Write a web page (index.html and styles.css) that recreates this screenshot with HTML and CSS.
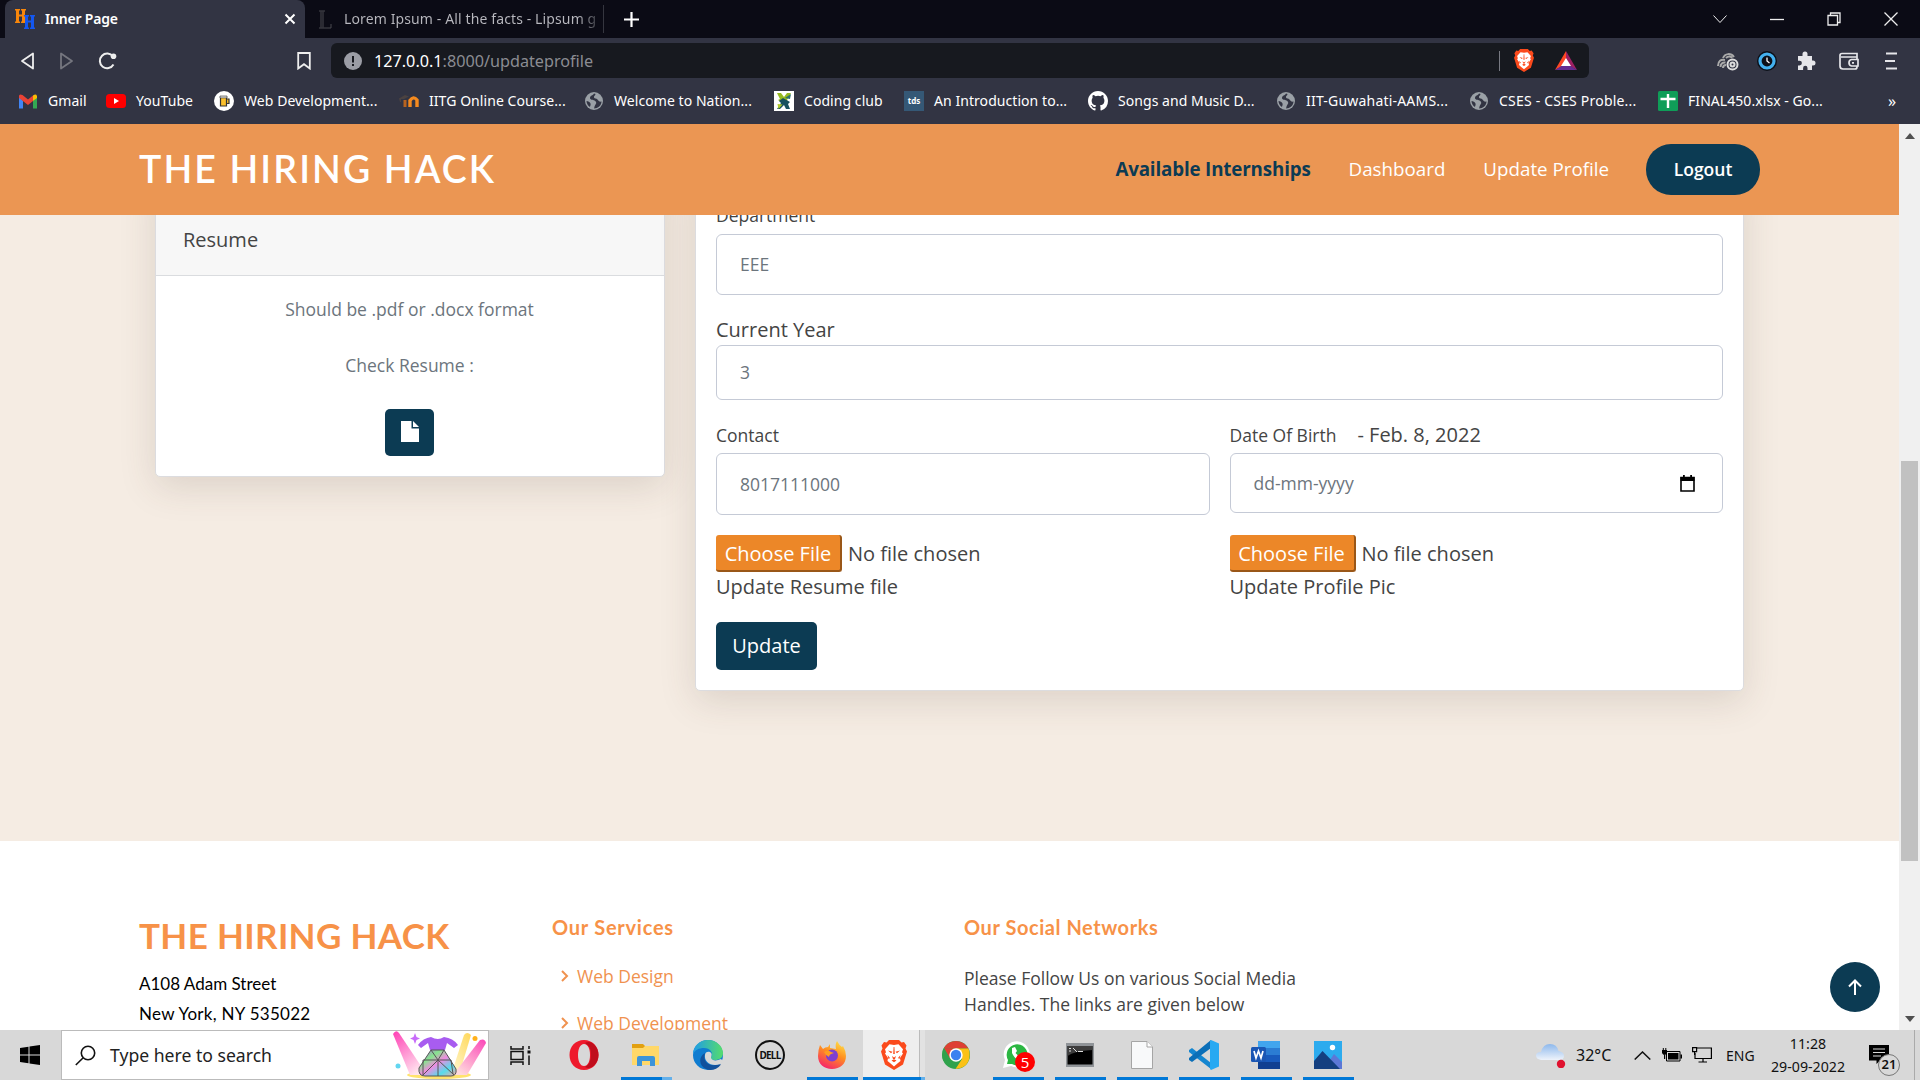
FILE: index.html
```html
<!DOCTYPE html>
<html lang="en">
<head>
<meta charset="utf-8">
<title>Inner Page</title>
<link rel="stylesheet" href="styles.css">
</head>
<body>
<svg class="defs" width="0" height="0">
  <symbol id="globe" viewBox="0 0 20 20"><circle cx="10" cy="10" r="9" fill="#9aa0a6"/><path d="M10 2.500c-1 2-4 2-4 4.500 0 2 3 1.500 4.500 2.500s2.500 2 1 4-1 3.500-1.500 4c4 0 7.500-3 7.500-7-2 .5-3-.5-4-2s-3-.5-3.500-2 1.500-2 1.500-3.500zM2.500 10c1.500 0 3.500 1 4 2.500s-.5 2.500-.5 3.500C4 15 2.500 12.500 2.500 10z" fill="#323443"/></symbol>
  <symbol id="lion" viewBox="0 0 26 30"><path d="M8 0h10l2.500 2.500 2.500-.5 2.500 3.500-1 3 1.500 3-4 13L13 30 4 24.500 0 11.500l1.500-3-1-3L3 2l2.500.5z" fill="#fb4a1c"/><path d="M13 5l4.500-.8 4.500 5-1 3 1 1.300-3 4.500.5 3-2.500 2L13 26.500 9 23l-2.500-2 .5-3-3-4.500 1-1.300-1-3 4.500-5z" fill="#fff"/><path d="M7 10.500l4.500 1.200-1.500 1.500zM19 10.500l-4.500 1.200 1.500 1.500zM10.500 20.500l2.500-1.200 2.500 1.200-2.500 1.700zM12.600 7h.8l.4 7h-1.600zM11 16l2 1.500 2-1.500-1 3h-2zM6.500 15l2.500 3-1.500 1zM19.500 15L17 18l1.500 1z" fill="#fb4a1c"/></symbol>
</svg>

<div class="tabs">
  <div class="tab tab-on">
    <svg width="20" height="20" viewBox="0 0 20 20"><path d="M0 0h5v1.500H4v4h3v-4H6V0h5v1.500h-1v11h1V14H6v-1.500h1V7.500H4v5h1V14H0v-1.500h1v-11H0z" fill="#f7860b"/><path d="M9 6h5v1.500h-1v4h3v-4h-1V6h5v1.500h-1v11h1V20h-5v-1.500h1v-5h-3v5h1V20H9v-1.500h1v-11H9z" fill="#1457f0"/></svg>
    <span class="tab-title">Inner Page</span>
    <svg width="12" height="12" viewBox="0 0 12 12" stroke="#fff" stroke-width="2"><path d="M1.500 1.500l9 9M10.500 1.500l-9 9"/></svg>
  </div>
  <div class="tab tab-off">
    <svg width="14" height="19" viewBox="0 0 14 19" fill="none" stroke="#4b4b50"><path d="M1 1h6M1 18h12v-4M3 1.500v16M5 1.500v16"/></svg>
    <span class="tab-title">Lorem Ipsum - All the facts - Lipsum g</span>
  </div>
  <svg class="plus" width="15" height="15" viewBox="0 0 15 15" stroke="#fff" stroke-width="2.200"><path d="M7.500 0v15M0 7.500h15"/></svg>
  <div class="winctl">
    <svg width="14" height="14" viewBox="0 0 14 14"><path d="M.5 3.500l6.500 7 6.500-7"/></svg>
    <svg width="14" height="14" viewBox="0 0 14 14"><path d="M0 7.500h14" stroke-width="1.300"/></svg>
    <svg width="14" height="14" viewBox="0 0 14 14"><path d="M1 3.500h9.500V13H1zM3.500 3.500V1H13v9.500h-2.500" stroke-width="1.300"/></svg>
    <svg width="14" height="14" viewBox="0 0 14 14"><path d="M.5.5l13 13M13.500.5l-13 13" stroke-width="1.300"/></svg>
  </div>
</div>

<div class="toolbar">
  <div class="navs">
    <svg width="15" height="18" viewBox="0 0 15 18"><path d="M13 1.500v15L2 9z"/></svg>
    <svg class="dim" width="15" height="18" viewBox="0 0 15 18"><path d="M2 1.500v15L13 9z"/></svg>
    <svg width="19" height="18" viewBox="0 0 19 18"><path d="M15.500 12.500A7.300 7.300 0 1 1 15 4.500" stroke-width="2"/><circle cx="15.500" cy="4.300" r="2.800" fill="#eee" stroke="none"/></svg>
  </div>
  <svg class="mark" width="14" height="18" viewBox="0 0 14 18"><path d="M1.200 1h11.600v15.500L7 12.200l-5.800 4.300z"/></svg>
  <div class="url">
    <svg width="18" height="18" viewBox="0 0 18 18"><circle cx="9" cy="9" r="9" fill="#9b9da5"/><path d="M8 4h2v6.500H8zM8 12h2v2H8z" fill="#17191f"/></svg>
    <span class="addr"><b>127.0.0.1</b>:8000/updateprofile</span>
    <i class="bar"></i>
    <svg width="20" height="23"><use href="#lion"/></svg>
    <svg class="bat" width="22" height="19" viewBox="0 0 22 19"><path d="M11 0L0 19l11-6z" fill="#ff4724"/><path d="M11 0l11 19-11-6z" fill="#9e1f63"/><path d="M0 19h22l-11-7z" fill="#662d91"/><path d="M11 7l5 8H6z" fill="#fff"/></svg>
  </div>
  <div class="exts">
    <svg width="22" height="20" viewBox="0 0 22 20"><g fill="none" stroke="#aaa" stroke-width="2"><path d="M1 15c0-5 3-7 7-6M3.500 16c0-3 2-5 5-4.500M6 17c0-2 1-3 3-3M6 7c2-5 8-5 11-1M9 7c2-2 5-2 6 0"/><circle cx="15.500" cy="13.500" r="5" stroke="#ddd"/><circle cx="15.500" cy="13.500" r="2" stroke="#ddd"/></g></svg>
    <svg class="e2" width="20" height="20" viewBox="0 0 20 20"><circle cx="10" cy="10" r="10" fill="#0c1018"/><circle cx="10" cy="10" r="7" fill="#0c1018" stroke="#43b0ee" stroke-width="3.200"/><path d="M10 6.500V10l2.500 2" fill="none" stroke="#fff" stroke-width="1.300"/></svg>
    <svg class="e3" width="19" height="19" viewBox="0 0 19 19"><path d="M1 5h4.500V3a2.500 2.500 0 0 1 5 0v2H15v4.500h1a2.500 2.500 0 0 1 0 5h-1V19h-4.500v-2a2.200 2.200 0 0 0-4.400 0v2H1v-4.500h1.500a2.400 2.400 0 0 0 0-4.800H1z" fill="#e6e6ea"/></svg>
    <svg class="e4" width="20" height="18" viewBox="0 0 20 18" fill="none" stroke="#e6e6ea" stroke-width="1.700"><path d="M18 5V1.500H3Q1 1.500 1 3.500V14q0 3 3 3h12q2 0 2-2v-1M2 5h16v2"/><path d="M19 7.500h-6.500Q10 8 10 10.800t2.500 3.200H19z"/><path d="M13 10.800h2"/></svg>
    <svg class="e5" width="12" height="18" viewBox="0 0 12 18" stroke="#e6e6ea" stroke-width="1.800"><path d="M1 1.500h11M0 9h10M1 16.500h11"/></svg>
  </div>
</div>

<div class="marks">
  <a><svg width="20" height="15" viewBox="0 0 20 15"><path d="M1 2v12.500h4V7z" fill="#4285f4"/><path d="M19 2v12.500h-4V7z" fill="#34a853"/><path d="M15 1.500V7l4-3V2q-1-2.500-4-.5z" fill="#fbbc04"/><path d="M1 4l9 7 5-4V1.500L10 5.500 4.500 1Q1-.5 1 2z" fill="#ea4335"/></svg><span>Gmail</span></a>
  <a><svg width="20" height="14" viewBox="0 0 20 14"><rect width="20" height="14" rx="3.500" fill="#f00"/><path d="M8 4l5 3-5 3z" fill="#fff"/></svg><span>YouTube</span></a>
  <a><svg width="20" height="20" viewBox="0 0 20 20"><circle cx="10" cy="10" r="10" fill="#fff"/><path d="M6.500 6h6v9h-6zM12.500 8H15v4.500h-2.500" fill="#fbc02d" stroke="#333" stroke-width="1.200"/><path d="M6 5h7v2H6z" fill="#ddd" stroke="#333" stroke-width=".6"/></svg><span>Web Development...</span></a>
  <a><svg width="20" height="14" viewBox="0 0 20 14"><path d="M6 13V6" stroke="#b8631f" stroke-width="3"/><path d="M11 13V6.500q3.500-5 7-.5V13" fill="none" stroke="#f58a1f" stroke-width="3.400"/><path d="M0 4.500L6 1l4 1.500-5 2.500-3 0v3H1z" fill="#4b4241"/></svg><span>IITG Online Course...</span></a>
  <a><svg width="20" height="20"><use href="#globe"/></svg><span>Welcome to Nation...</span></a>
  <a><svg width="20" height="20" viewBox="0 0 20 20"><path d="M0 0h20v20H0z" fill="#fff"/><path d="M3 2h4l3 4 3-4h4l-4 7 2 3-5 1-6-4 2-1z" fill="#95b91f"/><path d="M16 18h-4l-2-4-4 4H3l4-6-2-2 4-3 7 4-2 2z" fill="#17505e"/><path d="M3.500 13l5 .5-4 4.500z" fill="#b4cc2c"/><path d="M17 3l-1 5-5-1z" fill="#2a6f6f"/></svg><span>Coding club</span></a>
  <a><i class="tds">tds</i><span>An Introduction to...</span></a>
  <a><svg width="20" height="20" viewBox="0 0 16 16"><path fill="#fff" d="M8 0C3.580 0 0 3.580 0 8c0 3.540 2.290 6.530 5.470 7.590.4.070.55-.17.55-.38 0-.19-.01-.82-.01-1.490-2.010.37-2.530-.49-2.690-.94-.09-.23-.48-.94-.82-1.130-.28-.15-.68-.52-.01-.53.630-.01 1.080.58 1.230.82.720 1.210 1.870.87 2.330.66.070-.52.280-.87.510-1.070-1.780-.2-3.640-.89-3.640-3.950 0-.87.310-1.590.82-2.150-.08-.2-.36-1.020.08-2.120 0 0 .67-.21 2.200.82a7.600 7.600 0 0 1 4 0c1.530-1.040 2.200-.82 2.200-.82.440 1.100.160 1.920.080 2.120.51.560.82 1.270.82 2.150 0 3.070-1.870 3.750-3.650 3.950.29.250.54.730.54 1.480 0 1.070-.01 1.930-.01 2.200 0 .21.150.46.550.38A8 8 0 0 0 16 8c0-4.420-3.580-8-8-8z"/></svg><span>Songs and Music D...</span></a>
  <a><svg width="20" height="20"><use href="#globe"/></svg><span class="w2">IIT-Guwahati-AAMS...</span></a>
  <a><svg width="20" height="20"><use href="#globe"/></svg><span class="w2">CSES - CSES Proble...</span></a>
  <a><svg width="20" height="20" viewBox="0 0 20 20"><rect width="20" height="20" rx="1.500" fill="#0f9d58"/><path d="M10 3v14M2.500 8h15" stroke="#fff" stroke-width="2.400"/></svg><span>FINAL450.xlsx - Go...</span></a>
  <span class="more">»</span>
</div>

<div class="view">
  <div class="page">
    <header class="header">
      <h1 class="logo">THE HIRING HACK</h1>
      <nav>
        <a class="cur">Available Internships</a>
        <a>Dashboard</a>
        <a>Update Profile</a>
        <a class="logout"><span>Logout</span></a>
      </nav>
    </header>
    <main class="main">
      <section class="card resume">
        <div class="card-head"><span>Resume</span></div>
        <div class="card-body">
          <p><span>Should be .pdf or .docx format</span></p>
          <p><span>Check Resume :</span></p>
          <a class="filebtn"><svg width="18" height="21" viewBox="0 0 18 21" fill="#fff"><path d="M0 0h10.500v7.500H18V21H0z"/><path d="M12 0l6 6h-6z"/></svg></a>
        </div>
      </section>
      <section class="card form">
        <label class="sm">Department</label>
        <div class="field f1"><span>EEE</span></div>
        <label class="lg">Current Year</label>
        <div class="field f2"><span>3</span></div>
        <div class="cols">
          <div class="col">
            <label class="sm">Contact</label>
            <div class="field f3"><span>8017111000</span></div>
          </div>
          <div class="col">
            <div class="dob"><label class="sm">Date Of Birth</label><span>- Feb. 8, 2022</span></div>
            <div class="field f4"><span>dd-mm-yyyy</span><svg width="15" height="17" viewBox="0 0 15 17"><path d="M1 2.500h13V16H1z" fill="none" stroke="#000" stroke-width="1.600"/><path d="M.5 2h14v4H.5zM3 0h1.800v3H3zM10.200 0H12v3h-1.800z"/></svg></div>
          </div>
        </div>
        <div class="cols files">
          <div class="col">
            <div class="file"><span class="choose">Choose File</span><span>No file chosen</span></div>
            <div class="cap"><span>Update Resume file</span></div>
          </div>
          <div class="col">
            <div class="file"><span class="choose">Choose File</span><span>No file chosen</span></div>
            <div class="cap"><span>Update Profile Pic</span></div>
          </div>
        </div>
        <a class="update"><span>Update</span></a>
      </section>
    </main>
    <footer class="footer">
      <div class="f-about">
        <h3>THE HIRING HACK</h3>
        <p class="a1">A108 Adam Street</p>
        <p class="a2">New York, NY 535022</p>
      </div>
      <div class="f-serv">
        <h4>Our Services</h4>
        <a><svg width="8" height="12" viewBox="0 0 8 12"><path d="M1 1l5 5-5 5"/></svg><span>Web Design</span></a>
        <a><svg width="8" height="12" viewBox="0 0 8 12"><path d="M1 1l5 5-5 5"/></svg><span>Web Development</span></a>
      </div>
      <div class="f-soc">
        <h4>Our Social Networks</h4>
        <p><span>Please Follow Us on various Social Media</span><br><span>Handles. The links are given below</span></p>
      </div>
      <a class="totop"><svg width="14" height="16" viewBox="0 0 14 16" fill="none" stroke="#fff" stroke-width="2"><path d="M7 16V1.500M1 7.500l6-6 6 6"/></svg></a>
    </footer>
  </div>
  <div class="scroll">
    <svg width="10" height="6" viewBox="0 0 10 6"><path d="M5 0l5 6H0z" fill="#505050"/></svg>
    <i class="thumb"></i>
    <svg width="10" height="6" viewBox="0 0 10 6"><path d="M5 6l5-6H0z" fill="#505050"/></svg>
  </div>
</div>

<div class="task">
  <div class="start"><svg width="20" height="20" viewBox="0 0 20 20"><path d="M0 3l8.500-1.300v7.800H0zM9.500 1.500L20 0v9.500H9.500zM0 10.500h8.500v7.800L0 17zM9.500 10.500H20V20L9.500 18.500z"/></svg></div>
  <div class="search">
    <svg width="21" height="21" viewBox="0 0 21 21" fill="none" stroke="#111" stroke-width="1.600"><circle cx="13" cy="8" r="6.700"/><path d="M8.200 12.800L.8 20"/></svg>
    <span>Type here to search</span>
    <svg class="art" width="94" height="48" viewBox="0 0 94 48">
      <defs>
        <linearGradient id="b1" x2=".6" y2="1"><stop stop-color="#ff40b5"/><stop offset="1" stop-color="#ffe3ee"/></linearGradient>
        <linearGradient id="b2" x1="1" x2=".3" y2="1"><stop stop-color="#fb45b8"/><stop offset="1" stop-color="#ffd9dc"/></linearGradient>
        <linearGradient id="b3" x1="1" x2=".3" y2="1"><stop stop-color="#ffd85a"/><stop offset="1" stop-color="#fff5c8"/></linearGradient>
        <linearGradient id="dr" x2="1" y2="1"><stop stop-color="#b65cf5"/><stop offset=".3" stop-color="#86e58c"/><stop offset=".5" stop-color="#f08ae0"/><stop offset=".75" stop-color="#56dcec"/><stop offset="1" stop-color="#ffa8a0"/></linearGradient>
      </defs>
      <ellipse cx="46" cy="44" rx="32" ry="4" fill="#ffe36e"/>
      <path d="M0 3q3-5 6-1l28 42H17z" fill="url(#b1)"/><path d="M78 4q-4-4-7 0L58 44h8z" fill="url(#b3)"/><path d="M93 12q-1-5-6-3L60 44h14z" fill="url(#b2)"/>
      <path d="M22 2l1.500 4L27 7.500 23.500 9 22 13l-1.500-4L17 7.500 20.500 6z" fill="#c86bfa"/><circle cx="82" cy="7.500" r="2.500" fill="#ffb11a"/><circle cx="5" cy="35" r="2.500" fill="#62d6f0"/>
      <path d="M38 6q7 4 13 0 9 1 14 8l-4 3-7-5-2 7H37l-2-7-7 5-3-3q5-7 13-8z" fill="#a85cf0"/>
      <path d="M38 19h13l12 19q1 7-5 7H32q-7 0-6-8z" fill="url(#dr)" stroke="#555" stroke-width="1"/>
      <path d="M30 29h28M38 19l7 10 6-10M45 29L30 44M45 29l16 15M45 29v16M30 29l0 15M58 29l2 14" fill="none" stroke="#555"/>
    </svg>
  </div>
  <div class="view-btn"><svg width="21" height="19" viewBox="0 0 21 19" fill="none" stroke="#111" stroke-width="1.500"><path d="M1 0v3h12V0M1 5.500h12v8H1zM1 19v-3h12v3M19 0v3M19 9.500V19"/><path d="M17.500 4.500h3v3h-3z" fill="#111" stroke="none"/></svg></div>
  <div class="apps">
    <div class="app"><svg width="30" height="30" viewBox="0 0 30 30"><path fill-rule="evenodd" d="M15 0C6.500 0 .5 6.500.5 15S6.500 30 15 30s14.500-6.500 14.500-15S23.500 0 15 0zm0 4c4 0 6 5 6 11s-2 11-6 11-6-5-6-11 2-11 6-11z" fill="#ee1a2c"/><path d="M24 3.500q5.500 4.500 5.500 11.500T24 26.500Q20 29 16 27q6-3 6-12T16 3q4-2 8 .5z" fill="#c00d1c"/></svg></div>
    <div class="app run many"><svg width="30" height="30" viewBox="0 0 30 30"><path d="M1 4h11l2 2v4H1z" fill="#e2a010"/><path d="M1 8h11l2-2h14v19H1z" fill="#ffd869"/><path d="M6 26v-8q0-2 2-2h14q2 0 2 2v8h-5v-5h-8v5z" fill="#3c94d9"/></svg></div>
    <div class="app"><svg width="30" height="30" viewBox="0 0 30 30"><defs><linearGradient id="eg" x2="1"><stop stop-color="#1f9be8"/><stop offset="1" stop-color="#55dd6c"/></linearGradient></defs><circle cx="15" cy="15" r="15" fill="#0f7cd0"/><path d="M0 14C0 6 7 0 15 0s15 6 15 13c0 5-4 7-8 7-3 0-5-1-4-3 3-4-1-9-7-9-5 0-9 2-11 6z" fill="url(#eg)"/><path d="M12 13c-3 8 4 15 14 11l2 .5C24 30 17 31 13 29c-7-3-8-12-1-16z" fill="#12519c"/><path d="M12 15c0-3 3-4 5-3 3 2 1 4 1 6 1 3 6 3 10 1l2 2-2.500 3C18 27 11 22 12 15z" fill="#d8d8d8"/></svg></div>
    <div class="app"><div class="dell">DELL</div></div>
    <div class="app run"><svg width="30" height="30" viewBox="0 0 30 30"><defs><linearGradient id="fx" x1=".8" x2=".3" y2="1"><stop stop-color="#ffe14a"/><stop offset=".45" stop-color="#ff8f20"/><stop offset="1" stop-color="#f5236c"/></linearGradient></defs><path d="M3 5l3 4q2-2 5-2l2-3v4l6 1q-1-5 1-8 2 4 5 6l1-1q3 5 3 10c0 8-6 13-14 13S1 24 1 16Q1 10 3 5z" fill="url(#fx)"/><circle cx="15" cy="15.500" r="6" fill="#7f3fd0"/><path d="M7 12q4-3 7 0l3 1q-5 1-5 4-3-1-5-5z" fill="#ff9c21"/></svg></div>
    <div class="app run many active"><svg width="26" height="30"><use href="#lion"/></svg></div>
    <div class="app"><svg width="28" height="28" viewBox="0 0 28 28"><circle cx="14" cy="14" r="14" fill="#2fa24c"/><path d="M2 7Q6 0 14 0t12.500 7.500H14z" fill="#de4033"/><path d="M14 7.500h12.500Q29 15 26 21t-12.500 7l6.500-10z" fill="#fbc116"/><path d="M1.900 7L8 18l6-10.500z" fill="#de4033"/><path d="M1.900 7Q-1 13 1.500 20L9 19z" fill="#2fa24c"/><circle cx="14" cy="14" r="6.700" fill="#fff"/><circle cx="14" cy="14" r="5.200" fill="#3b82f0"/></svg></div>
    <div class="app run"><svg width="30" height="30" viewBox="0 0 30 30"><path d="M0 28l2-8a13 13 0 1 1 6 6z" fill="#fff"/><path d="M4 24l1-4a10.500 10.500 0 1 1 4 4z" fill="#2cb742"/><path d="M9 8l3-1 2 4-1.500 2 4 4 2-1.500 4 2-1 3Q13 22 9 13z" fill="#fff"/></svg><b class="badge">5</b></div>
    <div class="app run"><svg width="28" height="24" viewBox="0 0 28 24"><path d="M0 0h28v24H0z" fill="#909498"/><path d="M1.500 3h25v18.500h-25z"/><path d="M1.500 3h25v4Q8 8 1.500 13z" fill="#3e3e3e"/><path d="M3 5.500h2M3 8h2M7 5l4 4M12 8.500h5" stroke="#ddd" fill="none"/></svg></div>
    <div class="app run"><svg width="22" height="28" viewBox="0 0 22 28"><path d="M.5.5h15.500l5.500 5.500v21.500H.5z" fill="#f8f9fa" stroke="#a5a5a5"/><path d="M16 .5V6h5.500" fill="#fff" stroke="#a5a5a5"/></svg></div>
    <div class="app run"><svg width="30" height="30" viewBox="0 0 30 30"><path d="M3 8L22 23v6L0 12v-2z" fill="#1486d0"/><path d="M22 0v8L3 22l-3-2v-2z" fill="#0b6fb8"/><path d="M22 0l8 3.500v23L22 30l-1-1V1z" fill="#27a9f2"/></svg></div>
    <div class="app run"><svg width="30" height="28" viewBox="0 0 30 28"><path d="M7 0h22v7H7z" fill="#41a5ee"/><path d="M7 7h22v7H7z" fill="#2b7cd3"/><path d="M7 14h22v7H7z" fill="#185abd"/><path d="M7 21h22v7H7z" fill="#103f91"/><rect y="6" width="15" height="15" rx="1.500" fill="#1a56b4"/><path d="M3 10l2 7 2.500-7L10 17l2-7" fill="none" stroke="#fff" stroke-width="1.700"/></svg></div>
    <div class="app run"><svg width="28" height="28" viewBox="0 0 28 28"><path d="M0 0h28v28H0z" fill="#2cabee"/><path d="M10 28l10-15 8 8v7z" fill="#5c77d6"/><path d="M0 20l8.500-10L26 28H0z" fill="#143f80"/><circle cx="18.500" cy="6.500" r="2.700" fill="#fff"/></svg></div>
  </div>
  <div class="tray">
    <svg class="cloud" width="30" height="25" viewBox="0 0 30 25"><defs><linearGradient id="cl" x2="0" y2="1"><stop stop-color="#8db8ec"/><stop offset="1" stop-color="#eef3fb"/></linearGradient></defs><path d="M5 17Q0 16 0 12.500T5 9Q7 1 14 1t8.500 7Q28 9 28 13t-5 4z" fill="url(#cl)"/><circle cx="25" cy="21" r="4.200" fill="#e0122f"/></svg>
    <span class="temp">32°C</span>
    <svg class="up" width="17" height="9" viewBox="0 0 17 9" fill="none" stroke="#111" stroke-width="1.500"><path d="M.7 8.500l7.800-7.500 7.800 7.500"/></svg>
    <svg class="batt" width="20" height="14" viewBox="0 0 20 14"><path d="M4.500 3.500H18v9.500H4.500z" fill="none" stroke="#000"/><path d="M6 5h10.500v6.500H6zM18.500 6.500H20v4h-1.500zM0 2h5v3q-1 2-2.500 2T0 5zM.8 0h1v2h-1zM3.300 0h1v2h-1zM2 7h1.200v4H2z"/></svg>
    <svg class="net" width="20" height="16" viewBox="0 0 20 16" fill="none" stroke="#000" stroke-width="1.200"><path d="M5 1h14.400v10.500H3V6M11 11.500V15M6.500 15H15"/><path d="M.6.6h4v4h-4zM2.600 4.500V8"/></svg>
    <span class="eng">ENG</span>
    <div class="clock"><span class="time">11:28</span><span class="date">29-09-2022</span></div>
    <div class="notif"><svg width="20" height="20" viewBox="0 0 20 20"><path d="M0 0h20v15.500H11L7.500 19v-3.500H0z"/><path d="M4 4h12M4 7.500h12M4 11h8" stroke="#d8d8d8" stroke-width="1.200"/></svg><b>21</b></div>
  </div>
</div>
</body>
</html>
```
FILE: styles.css
```css
* { box-sizing: border-box; }
body { margin: 0; width: 1920px; height: 1080px; overflow: hidden; display: flex; flex-direction: column; font-family: "Open Sans", "Noto Sans", sans-serif; color: #444; }
svg { display: block; flex: none; }
.defs { position: absolute; }
h1, h3, h4, p { margin: 0; }
span, a, label { white-space: nowrap; }

/* browser chrome */
.tabs { height: 38px; flex: none; background: #0b0b15; display: flex; align-items: center; padding-left: 5px; font-family: "Noto Sans", sans-serif; font-size: 14px; color: #fff; }
.tab { height: 38px; display: flex; align-items: center; gap: 10px; }
.tab-title { padding-bottom: 2px; }
.tab-on { width: 300px; background: #323443; border-radius: 8px 8px 0 0; padding: 0 9px 0 10px; }
.tab-on .tab-title { flex: 1; font-weight: 600; letter-spacing: -.2px; }
.tab-off { width: 299px; height: 28px; padding-left: 13px; gap: 12px; border-right: 1px solid #35363f; }
.tab-off .tab-title { width: 254px; overflow: hidden; letter-spacing: .12px; background: linear-gradient(90deg, #b9b9bf 92%, #33343c); background-clip: text; color: transparent; }
.plus { margin-left: 20px; }
.winctl { margin-left: auto; display: flex; gap: 43px; padding-right: 22px; fill: none; stroke: #eee; }
.toolbar { height: 45px; flex: none; background: #323443; display: flex; align-items: center; }
.navs { width: 297px; padding-left: 20px; display: flex; gap: 24px; fill: none; stroke: #eee; stroke-width: 1.800; stroke-linejoin: round; }
.dim { stroke: #75767f; }
.mark { fill: none; stroke: #eee; stroke-width: 1.800; }
.url { margin-left: 20px; width: 1258px; height: 35px; border-radius: 6px; background: #17191f; display: flex; align-items: center; padding: 0 12px 0 13px; }
.addr { margin-left: 12px; flex: 1; font: 16.200px "Noto Sans", sans-serif; color: #8b8c92; }
.addr b { color: #fff; font-weight: 400; }
.bar { width: 1px; height: 20px; background: #777982; margin-right: 14px; }
.bat { margin-left: 21px; }
.exts { flex: 1; display: flex; align-items: center; padding-left: 128px; }
.e2 { margin-left: 18px; }
.e3 { margin-left: 20px; }
.e4 { margin-left: 23px; }
.e5 { margin-left: 26px; }
.marks { height: 41px; flex: none; background: #323443; display: grid; grid-template-columns: 88px 108px 185px 185px 190px 130px 184px 188px 193px 189px 225px auto; padding: 0 0 5px 18px; align-items: center; font: 14px "Noto Sans", sans-serif; color: #fff; }
.marks a { display: flex; align-items: center; gap: 10px; }
.marks span { padding-bottom: 1px; letter-spacing: .06px; }
.marks .w2 { letter-spacing: .2px; }
.tds { width: 20px; height: 20px; background: #355876; font: bold 8px/19px "Noto Sans", sans-serif; text-align: center; }
.more { padding-left: 5px; font-size: 16px; }

/* web page */
.view { display: flex; height: 906px; flex: none; }
.page { width: 1899px; display: flex; flex-direction: column; }
.header { height: 91px; flex: none; background: #eb9653; position: relative; z-index: 2; display: flex; align-items: center; justify-content: space-between; padding: 0 139px; }
.logo { font: 600 37.500px Lato, sans-serif; letter-spacing: 2.100px; color: #fff; padding-bottom: 2px; }
nav { display: flex; align-items: center; color: #fff; font-size: 18.750px; }
nav a { margin-left: 38px; padding-bottom: 2px; }
.cur { color: #0c3b53; font-weight: 700; letter-spacing: -.15px; }
.header .logout { width: 114px; height: 51px; margin-left: 37px; line-height: 50px; padding: 0; text-align: center; border-radius: 25px; background: #0c3b53; font-weight: 600; font-size: 17.500px; }
.main { height: 626px; flex: none; background: #f5ece3; overflow: hidden; display: flex; align-items: flex-start; gap: 30px; padding-left: 155px; }
.card { background: #fff; border: 1px solid #dcdcdf; border-radius: 5px; box-shadow: 0 10px 36px rgba(80, 60, 50, .15); margin-top: -40px; }
.resume { width: 510px; height: 302px; }
.card-head { height: 100px; background: #f7f7f7; border-bottom: 1px solid #dadcdf; padding: 49px 0 0 27px; font-size: 20px; line-height: 30px; }
.card-body { display: flex; flex-direction: column; align-items: center; padding: 19px 1px 0 0; font-size: 17.500px; line-height: 28px; color: #6c757d; }
.card-body p { margin-bottom: 28px; }
.filebtn { width: 49px; height: 47px; margin-top: 2px; border-radius: 5px; background: #0c3b53; padding: 12px 0 0 16px; }
.form { width: 1049px; height: 516px; padding: 26px 20px 0; font-size: 20px; display: flex; flex-direction: column; align-items: stretch; }
.sm { font-size: 17.500px; line-height: 26px; display: block; }
.lg { line-height: 30px; margin-top: 20px; }
.field { border: 1px solid #c5cad6; border-radius: 6px; padding: 0 20px 0 23px; font-size: 17.500px; color: #6c757d; display: flex; align-items: center; justify-content: space-between; }
.f1 { height: 61px; margin-top: 6px; padding-bottom: 2px; }
.f2 { height: 55px; padding-bottom: 2px; }
.cols { display: flex; gap: 20px; margin-top: 22px; }
.col { flex: 1; }
.f3 { height: 62px; margin-top: 5px; }
.f4 { height: 60px; margin-top: 5px; padding-right: 27px; }
.dob { display: flex; gap: 21px; line-height: 26px; }
.files { margin-top: 20px; }
.file { display: flex; align-items: center; height: 37px; gap: 6px; }
.choose { width: 126px; height: 37px; border-radius: 3px; background: #ec8728; border: solid #9a5718; border-width: 0 2px 2px 0; color: #fff; line-height: 37px; text-align: center; }
.cap { line-height: 29px; }
.update { width: 101px; height: 48px; margin-top: 21px; border-radius: 5px; background: #0c3b53; color: #fff; line-height: 47px; text-align: center; }
.footer { height: 189px; flex: none; background: #fff; overflow: hidden; display: flex; padding-left: 139px; color: #444; }
.f-about { width: 413px; padding-top: 71px; font-family: Lato, sans-serif; color: #000; }
.f-about h3 { font-size: 35px; line-height: 46px; font-weight: 700; letter-spacing: .35px; color: #f79248; }
.f-about p { font-size: 17px; line-height: 30px; }
.f-about .a1 { padding-top: 11px; }
.f-about .a2 { letter-spacing: .28px; }
.f-serv { width: 412px; padding-top: 72px; }
h4 { font: 700 20px/28px Lato, sans-serif; letter-spacing: .55px; color: #f79248; }
.f-serv h4 { letter-spacing: .75px; }
.f-serv a { display: flex; align-items: center; gap: 8px; padding-left: 9px; height: 30px; margin-top: 20px; font-size: 17.500px; color: #f0924f; }
.f-serv a + a { margin-top: 17px; }
.f-serv svg { fill: none; stroke: #f0924f; stroke-width: 2; }
.f-soc { padding-top: 72px; flex: 1; }
.f-soc p { font-size: 17.500px; line-height: 26px; margin-top: 24px; }
.totop { width: 50px; height: 50px; border-radius: 50%; background: #0c3b53; margin: 121px 19px 0 0; display: flex; align-items: center; justify-content: center; }
.scroll { width: 21px; background: #f0f0f0; display: flex; flex-direction: column; justify-content: space-between; align-items: center; padding: 9px 0 8px; }
.thumb { width: 17px; height: 400px; background: #c1c1c1; margin-top: 167px; }

/* taskbar */
.task { height: 50px; flex: none; background: #d8d8d8; display: flex; align-items: center; font-family: "Noto Sans", sans-serif; color: #111; }
.start { width: 61px; padding-left: 20px; }
.search { width: 428px; height: 50px; background: #fff; border: 1px solid #bbb; display: flex; align-items: center; padding-left: 13px; font-size: 17.600px; color: #222; }
.search span { margin-left: 14px; flex: 1; padding-bottom: 1px; }
.art { margin-right: 1px; }
.view-btn { width: 64px; padding-left: 21px; }
.apps { display: flex; height: 50px; }
.app { width: 62px; height: 50px; display: flex; align-items: center; justify-content: center; position: relative; }
.run::after { content: ""; position: absolute; bottom: 0; left: 6px; width: 51px; height: 3px; background: #0078d7; }
.many::after { background: linear-gradient(90deg, #0078d7 80%, #64b0ea 80%); }
.active { background: linear-gradient(90deg, #eee 56px, #bbb 56px, #bbb 57px, #e2e2e2 57px); }
.active::after { left: 0; width: 62px; background: linear-gradient(90deg, #0078d7 93%, #64b0ea 93%); }
.dell { width: 30px; height: 30px; border: 2px solid #111; border-radius: 50%; font: bold 10px/26px "Noto Sans", sans-serif; letter-spacing: -.8px; text-align: center; }
.badge { position: absolute; left: 28px; top: 22px; width: 20px; height: 20px; border-radius: 50%; background: #f00; color: #fff; font: 15px/20px "Open Sans", sans-serif; text-align: center; }
.tray { flex: 1; display: flex; align-items: center; padding-left: 177px; font-size: 16px; height: 50px; border-right: 1px solid #aaa; margin-right: 5px; }
.temp { margin-left: 10px; width: 58px; }
.batt { margin-left: 11px; }
.net { margin-left: 10px; }
.eng { margin-left: 14px; width: 40px; font-size: 14px; }
.clock { width: 84px; display: flex; flex-direction: column; align-items: center; font-size: 14.200px; line-height: 23px; }
.notif { margin-left: 19px; position: relative; }
.notif b { position: absolute; left: 9px; top: 9px; width: 22px; height: 22px; border: 1px solid #777; border-radius: 50%; background: #d8d8d8; font-size: 13px; line-height: 19px; font-weight: 600; text-align: center; }
```
